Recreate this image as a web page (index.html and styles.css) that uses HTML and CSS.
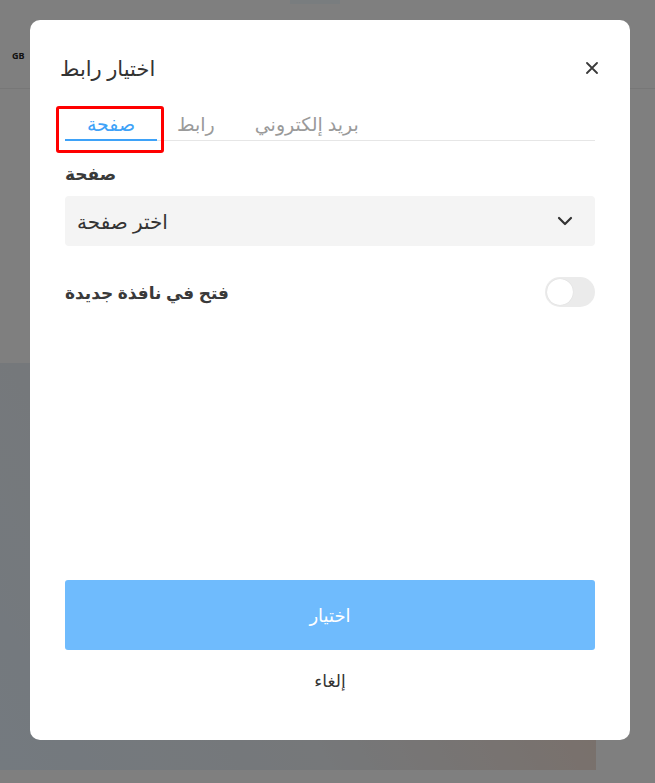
FILE: index.html
```html
<!DOCTYPE html>
<html lang="ar">
<head>
<meta charset="utf-8">
<link rel="stylesheet" href="styles.css">
</head>
<body>
<div class="page">
  <header class="site-header">
    <div class="top-tab"></div>
    <span class="lang">GB</span>
  </header>
  <section class="gap-area"></section>
  <section class="hero"></section>
</div>
<div class="overlay">
  <div class="modal">
    <div class="modal-head">
      <h2 class="modal-title">اختيار رابط</h2>
      <button class="close" aria-label="close">
        <svg width="12" height="12" viewBox="0 0 12 12"><path d="M1 1L11 11M11 1L1 11" stroke="#3a3a3a" stroke-width="1.8" stroke-linecap="round"/></svg>
      </button>
    </div>
    <div class="tabs">
      <div class="tab active">صفحة</div>
      <div class="tab">رابط</div>
      <div class="tab">بريد إلكتروني</div>
    </div>
    <label class="field-label">صفحة</label>
    <div class="select">
      <span>اختر صفحة</span>
      <svg width="16" height="10" viewBox="0 0 16 10"><path d="M2 2L8 8L14 2" fill="none" stroke="#333" stroke-width="2.2" stroke-linecap="round" stroke-linejoin="round"/></svg>
    </div>
    <div class="toggle-row">
      <span class="toggle-label">فتح في نافذة جديدة</span>
      <span class="toggle"><span class="knob"></span></span>
    </div>
    <div class="spacer"></div>
    <button class="primary">اختيار</button>
    <button class="cancel">إلغاء</button>
  </div>
</div>
</body>
</html>
```
FILE: styles.css
```css
*, *::before, *::after { box-sizing: border-box; }
html, body { margin: 0; padding: 0; }
body {
  width: 655px;
  height: 783px;
  overflow: hidden;
  position: relative;
  font-family: "Noto Sans", "DejaVu Sans", sans-serif;
  background: #fff;
}
.page { width: 655px; }
.site-header {
  height: 89px;
  border-bottom: 1px solid #eee;
  position: relative;
  display: flex;
  align-items: center;
  padding-left: 12px;
}
.top-tab {
  position: absolute;
  left: 290px;
  top: 0;
  width: 50px;
  height: 4px;
  background: #f2fbff;
}
.lang { font-size: 9px; font-weight: 700; color: #222; margin-top: 22px; }
.gap-area { height: 274px; }
.hero {
  width: 596px;
  height: 407px;
  background: linear-gradient(60deg, #e8f4ff 0%, #ecf0f4 40%, #f8d6c2 100%);
}
.overlay {
  position: absolute;
  inset: 0;
  background: rgba(0,0,0,0.5);
  padding: 20px 0 0 30px;
}
.modal {
  width: 600px;
  height: 720px;
  background: #fff;
  border-radius: 10px;
  padding: 34px 35px 48px 35px;
  display: flex;
  flex-direction: column;
}
.modal-head {
  display: flex;
  justify-content: space-between;
  align-items: center;
  height: 28px;
}
.modal-title {
  margin: 0 0 0 -5px;
  font-size: 21px;
  font-weight: 400;
  color: #333;
}
.close {
  border: 0;
  background: none;
  padding: 0;
  width: 12px;
  height: 12px;
  display: flex;
  margin-right: -3px;
}
.tabs {
  display: flex;
  margin-top: 28px;
  border-bottom: 1px solid #e6e6e6;
  height: 31px;
}
.tab {
  font-size: 19px;
  color: #9a9a9a;
  padding: 0 20px;
  line-height: 28px;
}
.tab.active {
  color: #3ea2f8;
  width: 92px;
  padding: 0;
  text-align: center;
  border-bottom: 2px solid #3ea2f8;
  margin-bottom: -1px;
  position: relative;
}
.tab.active::after {
  content: "";
  position: absolute;
  left: -9px;
  top: -4px;
  width: 108px;
  height: 47px;
  border: 3px solid #ff0000;
  border-radius: 3px;
}
.field-label {
  margin-top: 21px;
  font-size: 17px;
  font-weight: 600;
  color: #3a3a3a;
  line-height: 24px;
}
.select {
  margin-top: 10px;
  height: 50px;
  background: #f4f4f4;
  border-radius: 4px;
  display: flex;
  align-items: center;
  justify-content: space-between;
  padding: 0 22px 0 12px;
  font-size: 20px;
  color: #333;
}
.toggle-row {
  margin-top: 31px;
  display: flex;
  justify-content: space-between;
  align-items: center;
  height: 30px;
}
.toggle-label { font-size: 17px; font-weight: 600; color: #3a3a3a; }
.toggle {
  width: 50px;
  height: 30px;
  border-radius: 15px;
  background: #ebebeb;
  padding: 2px;
  display: flex;
}
.knob {
  width: 26px;
  height: 26px;
  border-radius: 50%;
  background: #fff;
  box-shadow: 0 0 1px rgba(0,0,0,0.15);
}
.spacer { flex: 1; }
.primary {
  height: 70px;
  border: 0;
  border-radius: 3px;
  background: #6fbbfd;
  color: #fff;
  font-family: inherit;
  font-size: 18px;
}
.cancel {
  margin-top: 18px;
  border: 0;
  background: none;
  font-family: inherit;
  font-size: 17px;
  color: #333;
  height: 24px;
  padding: 0;
}
```
